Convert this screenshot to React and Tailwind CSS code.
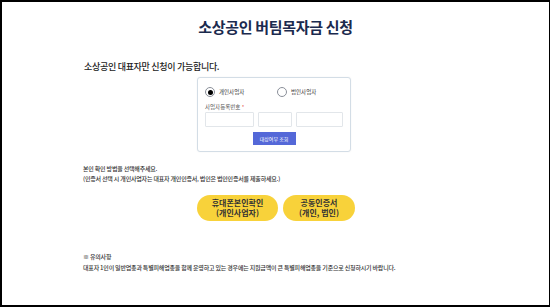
import React from "react";

function Radio({ checked, label }) {
  return (
    <label className="flex items-center gap-[4px]">
      <span className="w-[10px] h-[10px] rounded-full border border-[#8a8f99] bg-white flex items-center justify-center">
        {checked && <span className="w-[5px] h-[5px] rounded-full bg-black"></span>}
      </span>
      <span className="text-[5.5px] text-[#333]">{label}</span>
    </label>
  );
}

export default function App() {
  return (
    <div
      className="w-[550px] h-[307px] bg-white border-2 border-r border-black overflow-hidden text-[#222]"
      style={{ fontFamily: '"Noto Sans CJK KR", "Noto Sans", sans-serif' }}
    >
      <h1 className="pt-[15px] text-center text-[15px] leading-[20px] font-bold text-[#1b2a4e] tracking-[-0.3px]">
        소상공인 버팀목자금 신청
      </h1>

      <div className="ml-[81px] w-[386px]">
        <p className="mt-[24px] ml-[1px] text-[9px] leading-[12px] font-medium text-[#222] tracking-[-0.3px]">
          소상공인 대표자만 신청이 가능합니다.
        </p>

        <div className="ml-[114px] mt-[4px] w-[154px] rounded-[3px] border border-[#d3dde6] bg-white px-[7px] pt-[9px] pb-[6px] shadow-[0_0_2px_rgba(0,0,0,0.06)]">
          <div className="flex items-center h-[10px]">
            <div className="w-[72px]">
              <Radio checked label="개인사업자" />
            </div>
            <Radio label="법인사업자" />
          </div>
          <div className="mt-[6px] text-[5.5px] leading-[8px] text-[#555]">
            사업자등록번호 <span className="text-[#e0312e]">*</span>
          </div>
          <div className="mt-[1px] flex gap-[4px]">
            <div className="w-[50px] h-[15px] border border-[#e2e6ea] rounded-[1px]"></div>
            <div className="w-[34px] h-[15px] border border-[#e2e6ea] rounded-[1px]"></div>
            <div className="w-[48px] h-[15px] border border-[#e2e6ea] rounded-[1px]"></div>
          </div>
          <div className="mt-[5px] flex justify-center">
            <button className="w-[43px] h-[13px] bg-[#5468d8] text-white text-[5px] leading-[13px]">
              대상여부 조회
            </button>
          </div>
        </div>

        <div className="mt-[12px] text-[6px] leading-[10px] font-medium text-[#333] tracking-[-0.2px]">
          <p>본인 확인 방법을 선택해주세요.</p>
          <p>(인증서 선택 시 개인사업자는 대표자 개인인증서, 법인은 법인인증서를 제출하세요.)</p>
        </div>

        <div className="mt-[11px] flex justify-center gap-[5px]">
          <button className="w-[81px] h-[26px] rounded-full bg-[#f8d23a] text-[8px] leading-[10px] font-bold text-[#333]">
            휴대폰본인확인
            <br />
            (개인사업자)
          </button>
          <button className="w-[72px] h-[26px] rounded-full bg-[#f8d23a] text-[8px] leading-[10px] font-bold text-[#333]">
            공동인증서
            <br />
            (개인, 법인)
          </button>
        </div>

        <div className="mt-[31px] text-[6px] leading-[10px] font-medium text-[#333] tracking-[-0.2px]">
          <p>※ 유의사항</p>
          <p className="mt-[1px]">
            대표자 1인이 일반업종과 특별피해업종을 함께 운영하고 있는 경우에는 지원금액이 큰 특별피해업종을 기준으로 신청하시기 바랍니다.
          </p>
        </div>
      </div>
    </div>
  );
}
